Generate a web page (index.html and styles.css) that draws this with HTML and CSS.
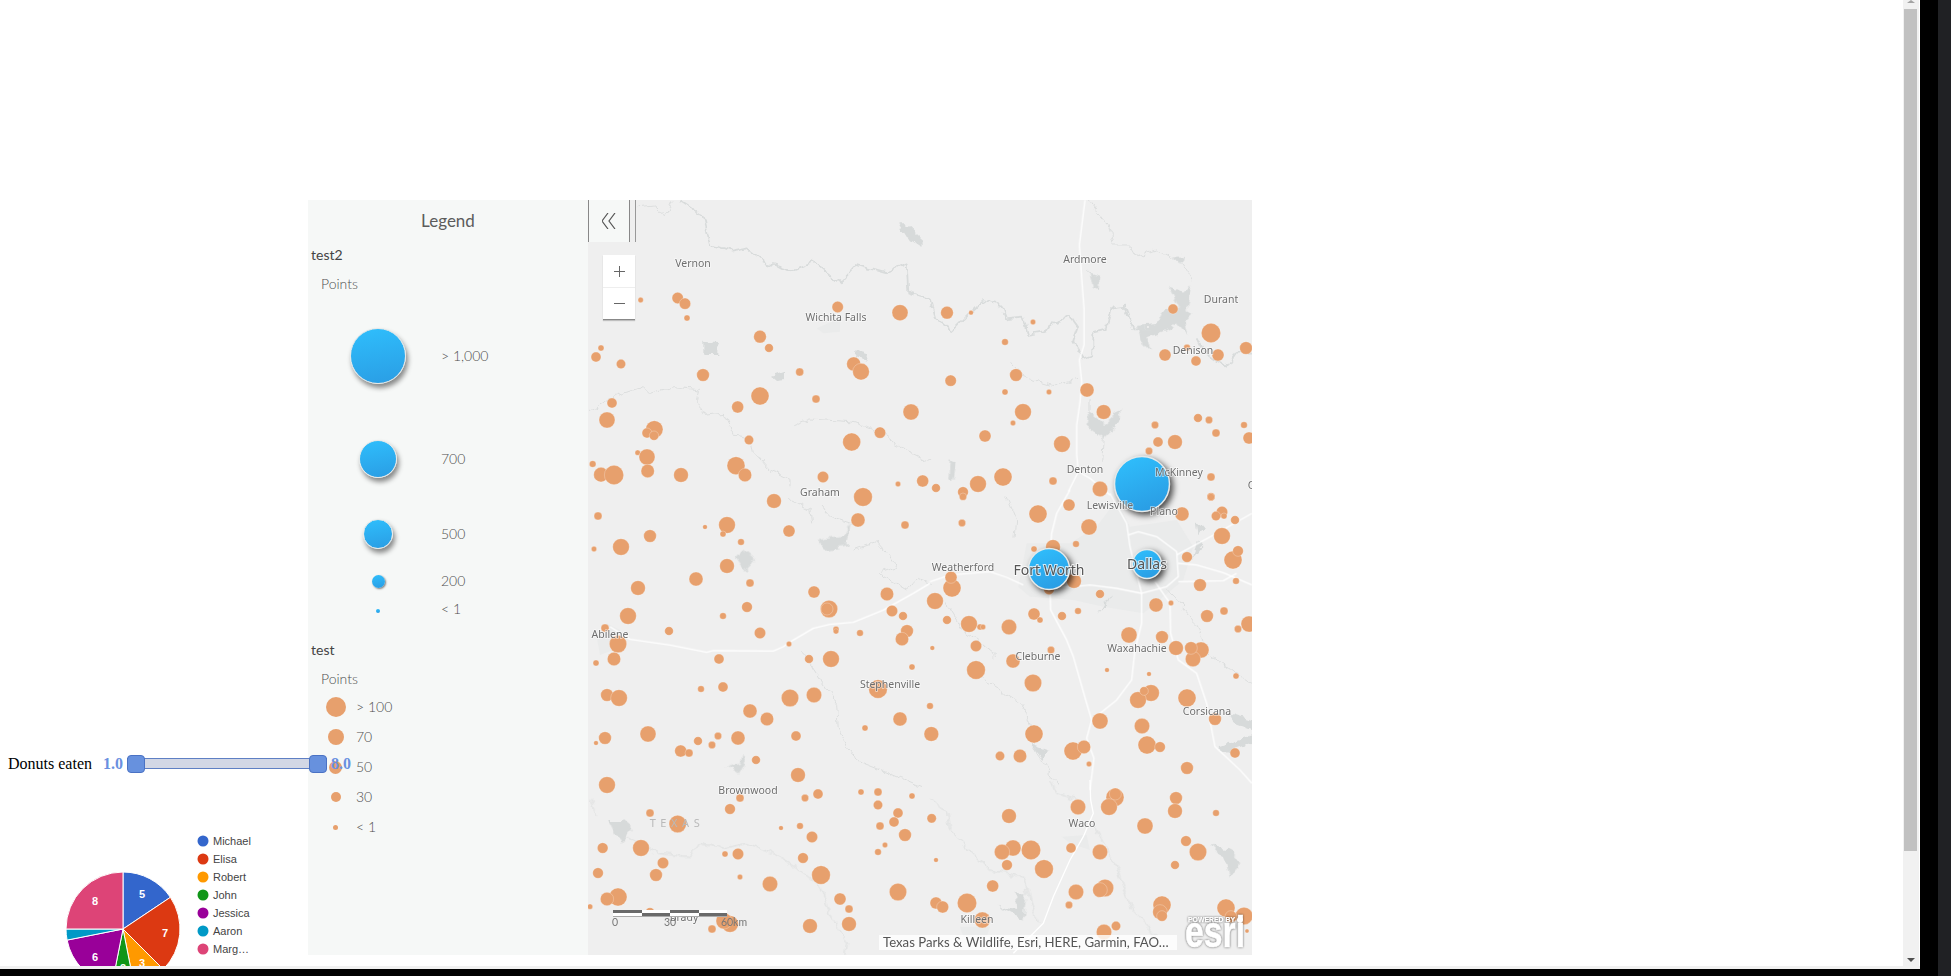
FILE: index.html
```html
<!DOCTYPE html>
<html lang="en">
<head>
    <meta charset="UTF-8">
    <meta name="viewport" content="width=device-width, initial-scale=1.0">
    <title>Document</title>
    <link rel="stylesheet" href="styles.css">
</head>
<body>
<div class="window">
    <div class="window-main">
        <div class="viewport">
            <div class="side">
                <div class="slider-row">
                    <span class="slider-label">Donuts eaten</span>
                    <span class="slider-value">1.0</span>
                    <div class="slider-track">
                        <span class="slider-handle handle-min"></span>
                        <span class="slider-handle handle-max"></span>
                    </div>
                    <span class="slider-value value-max">8.0</span>
                </div>
                <svg class="pie" viewBox="0 830 300 136" width="300" height="136">
                    <g stroke="#fff" stroke-width="1">
                        <path fill="#3366cc" d="M123 929V872A57 57 0 0 1 170.4 897.3Z"/>
                        <path fill="#dc3912" d="M123 929L170.4 897.3A57 57 0 0 1 163.3 969.3Z"/>
                        <path fill="#ff9900" d="M123 929L163.3 969.3A57 57 0 0 1 134.1 984.9Z"/>
                        <path fill="#109618" d="M123 929L134.1 984.9A57 57 0 0 1 111.9 984.9Z"/>
                        <path fill="#990099" d="M123 929L111.9 984.9A57 57 0 0 1 67.1 940.1Z"/>
                        <path fill="#0099c6" d="M123 929L67.1 940.1A57 57 0 0 1 66 929Z"/>
                        <path fill="#dd4477" d="M123 929H66A57 57 0 0 1 123 872Z"/>
                    </g>
                    <g class="pie-values">
                        <text x="142" y="898">5</text>
                        <text x="165" y="937">7</text>
                        <text x="142" y="967">3</text>
                        <text x="123" y="972">2</text>
                        <text x="95" y="961">6</text>
                        <text x="95" y="905">8</text>
                    </g>
                    <circle cx="203" cy="841" r="5.5" fill="#3366cc"/>
                    <circle cx="203" cy="859" r="5.5" fill="#dc3912"/>
                    <circle cx="203" cy="877" r="5.5" fill="#ff9900"/>
                    <circle cx="203" cy="895" r="5.5" fill="#109618"/>
                    <circle cx="203" cy="913" r="5.5" fill="#990099"/>
                    <circle cx="203" cy="931" r="5.5" fill="#0099c6"/>
                    <circle cx="203" cy="949" r="5.5" fill="#dd4477"/>
                    <g class="pie-names">
                        <text x="213" y="845">Michael</text>
                        <text x="213" y="863">Elisa</text>
                        <text x="213" y="881">Robert</text>
                        <text x="213" y="899">John</text>
                        <text x="213" y="917">Jessica</text>
                        <text x="213" y="935">Aaron</text>
                        <text x="213" y="953">Marg…</text>
                    </g>
                </svg>
            </div>

            <div class="widget">
                <div class="legend">
                    <div class="legend-title">Legend</div>
                    <div class="layer-name">test2</div>
                    <div class="layer-sub">Points</div>
                    <div class="rows-blue">
                        <div class="row"><span class="sym"><i class="blue blue-xl"></i></span><span class="row-text">&gt; 1,000</span></div>
                        <div class="row"><span class="sym"><i class="blue blue-l"></i></span><span class="row-text">700</span></div>
                        <div class="row"><span class="sym"><i class="blue blue-m"></i></span><span class="row-text">500</span></div>
                        <div class="row"><span class="sym"><i class="blue blue-s"></i></span><span class="row-text">200</span></div>
                        <div class="row row-tiny"><span class="sym"><i class="blue blue-xs"></i></span><span class="row-text">&lt; 1</span></div>
                    </div>
                    <div class="layer-name layer-next">test</div>
                    <div class="layer-sub">Points</div>
                    <div class="rows-orange">
                        <div class="row"><span class="sym"><i class="dot dot-xl"></i></span><span class="row-text">&gt; 100</span></div>
                        <div class="row"><span class="sym"><i class="dot dot-l"></i></span><span class="row-text">70</span></div>
                        <div class="row"><span class="sym"><i class="dot dot-m"></i></span><span class="row-text">50</span></div>
                        <div class="row"><span class="sym"><i class="dot dot-s"></i></span><span class="row-text">30</span></div>
                        <div class="row"><span class="sym"><i class="dot dot-xs"></i></span><span class="row-text">&lt; 1</span></div>
                    </div>
                </div>

                <div class="map">
                    <svg class="map-svg" viewBox="588 200 664 755" width="664" height="755">
                        <defs>
                            <linearGradient id="blueFill" x1="0.2" y1="0" x2="0.6" y2="1">
                                <stop offset="0" stop-color="#2fbefc"/>
                                <stop offset="1" stop-color="#2a9de4"/>
                            </linearGradient>
                            <!-- makes the hand placed lines look like real rivers -->
                            <filter id="wiggle" filterUnits="userSpaceOnUse" x="588" y="200" width="664" height="755">
                                <feTurbulence type="fractalNoise" baseFrequency="0.11" numOctaves="2" seed="4"/>
                                <feDisplacementMap in="SourceGraphic" scale="9" xChannelSelector="R" yChannelSelector="G"/>
                            </filter>
                        </defs>

                        <!-- towns -->
                        <g class="urban">
                            <g transform="translate(930,490) scale(.3333)">
                                <path d="M265 290L290 160L420 160L500 110L560 30L600 110L740 90L790 170L760 270L700 320L640 370L520 350L430 330L300 320Z"/>
                            </g>
                            <g transform="translate(590,490) scale(.3333)">
                                <path d="M20 440L50 400L90 420L70 480L30 495Z"/>
                            </g>
                            <g transform="translate(590,195) scale(.3333)">
                                <path d="M680 400L750 370L750 410L700 415Z"/>
                            </g>
                            <g transform="translate(930,780) scale(.3333)">
                                <path d="M395 170L470 165L480 210L420 190Z"/>
                                <path d="M90 440L180 440L170 470L100 470Z"/>
                            </g>
                        </g>

                        <!-- lakes -->
                        <g class="lakes">
                            <g transform="translate(590,195) scale(.3333)">
                                <path d="M925 85L945 85L995 130L995 155L950 125Z"/>
                                <path d="M340 440L385 445L385 480L340 480Z"/>
                                <path d="M540 545L585 530L585 555L555 558Z"/>
                                <path d="M800 465L835 475L830 500L795 490Z"/>
                            </g>
                            <g transform="translate(930,195) scale(.3333)">
                                <path d="M478 230L510 240L505 285L490 280Z"/>
                                <path d="M715 275L760 290L785 265L770 340L790 350L760 380L770 420L740 385L720 400L650 430L660 470L640 450L625 395L680 390L700 350L750 340Z"/>
                                <path d="M725 185L760 180L750 210Z"/>
                                <path d="M475 650L520 690L575 640L570 680L520 730L470 690Z"/>
                                <path d="M60 790L80 800L70 855L55 850Z"/>
                            </g>
                            <g transform="translate(590,490) scale(.3333)">
                                <path d="M680 150L760 140L785 95L775 165L705 180Z"/>
                                <path d="M435 205L460 180L495 210L465 245L450 225Z"/>
                                <path d="M410 830L450 820L455 790L465 815L445 850Z"/>
                            </g>
                            <g transform="translate(590,780) scale(.3333)">
                                <path d="M55 120L95 120L125 145L95 185L75 160Z"/>
                            </g>
                            <g transform="translate(930,490) scale(.3333)">
                                <path d="M505 375L545 310L530 345Z"/>
                                <path d="M900 670L966 690L966 720L910 700Z"/>
                                <path d="M865 770L966 735L966 760L890 785Z"/>
                                <path d="M800 150L820 170L790 205Z"/>
                                <path d="M800 90L825 120L805 135Z"/>
                                <path d="M300 760L355 780L340 810Z"/>
                            </g>
                            <g transform="translate(930,780) scale(.3333)">
                                <path d="M845 195L900 205L930 245L900 290L885 240Z"/>
                                <path d="M205 380L260 390L255 340L290 340L280 420Z"/>
                            </g>
                        </g>

                        <!-- rivers and county lines -->
                        <g class="rivers">
                            <g transform="translate(590,195) scale(.3333)">
                                <path d="M140 35L190 30L230 65L250 20"/>
                                <path class="river-wide" d="M270 15L340 60L360 150L420 170L470 160L520 200L610 225L670 200L750 265L800 210L890 235L950 205L955 290L1020 310"/>
                                <path d="M0 650L70 605L160 575L180 595L250 575L325 585L320 620L345 660L400 655L430 720L480 730L490 770L540 825L600 850L600 880"/>
                                <path d="M610 692L660 672L780 680L860 705L920 750L1020 800"/>
                            </g>
                            <g transform="translate(930,195) scale(.3333)">
                                <path class="river-wide" d="M0 310L15 370L70 405L160 315L210 330L225 370L280 365L295 420L350 410L370 380L420 365L445 400L430 440L460 490L490 480L490 410L530 400L545 340L585 335L610 400L660 400"/>
                                <path class="river-wide" d="M800 430L820 470L890 515L920 470L966 470"/>
                                <path d="M475 15L540 100L550 150L600 150L620 185L680 165L760 210L790 260"/>
                                <path d="M245 505L280 545L370 572L450 550"/>
                                <path d="M480 610L480 660M520 730L515 800"/>
                            </g>
                            <g transform="translate(590,490) scale(.3333)">
                                <path d="M600 30L660 60L665 100M690 45L720 80L780 100"/>
                                <path d="M790 180L860 155L900 200L920 230L865 250L950 300L980 265L1020 280"/>
                                <path d="M640 490L700 580L740 640L745 720L770 770L800 810L900 850L1000 890"/>
                            </g>
                            <g transform="translate(590,780) scale(.3333)">
                                <path d="M0 60L20 110M100 170L200 220L300 230L330 190L400 205L470 190L540 215L600 250L630 270L690 320L720 400L770 490L765 525"/>
                            </g>
                            <g transform="translate(930,490) scale(.3333)">
                                <path d="M230 20L260 90L255 140"/>
                                <path d="M50 340L100 420L150 460L200 500"/>
                                <path d="M150 560L210 600L270 640L290 670L320 790L390 890"/>
                                <path d="M710 300L800 400L830 490L966 580"/>
                            </g>
                            <g transform="translate(930,780) scale(.3333)">
                                <path d="M365 0L380 40L440 60"/>
                                <path d="M0 55L50 100L60 150L180 270L280 290L320 430"/>
                                <path d="M490 130L560 260L600 380L680 470"/>
                            </g>
                        </g>

                        <!-- highways -->
                        <g class="roads">
                            <g transform="translate(930,195) scale(.3333)">
                                <path d="M465 15L458 70L448 150L455 250L462 340L462 450L448 495L455 560L450 620L440 690L440 780L445 830L415 890"/>
                                <path d="M445 830L480 850L540 900"/>
                            </g>
                            <g transform="translate(590,490) scale(.3333)">
                                <path d="M60 410L120 448L240 465L350 487L370 482L550 483L580 470L610 450L670 415L720 403L790 397L880 360L970 310L1020 280"/>
                            </g>
                            <g transform="translate(930,490) scale(.3333)">
                                <path d="M420 0L380 70L365 130L362 170"/>
                                <path d="M540 10L590 100L600 170L635 310"/>
                                <path d="M595 135L625 125L680 140L740 185L745 260L710 290L635 310L560 295L480 285L430 290L360 290"/>
                                <path d="M0 275L60 255L180 245L230 262L280 285"/>
                                <path d="M360 290L362 360L410 450L430 500L470 640L485 690L470 745L492 805L480 900"/>
                                <path d="M635 310L635 400L615 480L605 570L560 630L510 670"/>
                                <path d="M675 275L720 340L722 430L745 510L800 550L830 640L855 770L930 840L966 880"/>
                                <path d="M740 195L860 130L966 70"/>
                                <path d="M745 220L800 225L880 248L966 285"/>
                                <path d="M745 275L880 272L920 250"/>
                            </g>
                            <g transform="translate(930,780) scale(.3333)">
                                <path d="M480 0L482 60L490 100L460 170L420 240L370 350L340 430L250 520"/>
                            </g>
                        </g>

                        <g id="points" class="points"></g>

                        <circle class="cluster" cx="1142" cy="484" r="27.5"/>
                        <circle class="cluster" cx="1049" cy="569" r="20.5"/>
                        <circle class="cluster" cx="1147" cy="564" r="14.5"/>

                        <g class="labels">
                            <text x="693" y="263">Vernon</text>
                            <text x="836" y="317">Wichita Falls</text>
                            <text x="820" y="492">Graham</text>
                            <text x="1085" y="259">Ardmore</text>
                            <text x="1221" y="299">Durant</text>
                            <text x="1193" y="350">Denison</text>
                            <text x="1085" y="469">Denton</text>
                            <text x="1179" y="472">McKinney</text>
                            <text x="1251" y="485">C</text>
                            <text x="1110" y="505">Lewisville</text>
                            <text x="1164" y="511">Plano</text>
                            <text x="963" y="567">Weatherford</text>
                            <text x="1038" y="656">Cleburne</text>
                            <text x="1137" y="648">Waxahachie</text>
                            <text x="1207" y="711">Corsicana</text>
                            <text x="610" y="634">Abilene</text>
                            <text x="890" y="684">Stephenville</text>
                            <text x="748" y="790">Brownwood</text>
                            <text x="1082" y="823">Waco</text>
                            <text x="977" y="919">Killeen</text>
                            <text x="684" y="917">Brady</text>
                            <text class="label-big" x="1049" y="569">Fort Worth</text>
                            <text class="label-big" x="1147" y="563">Dallas</text>
                            <text class="label-state" x="677" y="822">TEXAS</text>
                        </g>

                        <!-- scale bar -->
                        <g class="scale-bar">
                            <rect x="613" y="910" width="29" height="3" fill="#6a6a6a"/>
                            <rect x="642" y="910" width="28" height="3" fill="#fff"/>
                            <rect x="670" y="910" width="29" height="3" fill="#6a6a6a"/>
                            <rect x="699" y="910" width="28" height="3" fill="#fff"/>
                            <rect x="613" y="913" width="29" height="3" fill="#fff"/>
                            <rect x="642" y="913" width="28" height="3" fill="#6a6a6a"/>
                            <rect x="670" y="913" width="29" height="3" fill="#fff"/>
                            <rect x="699" y="913" width="28" height="3" fill="#6a6a6a"/>
                            <rect x="613" y="916" width="114" height="1" fill="#aaa"/>
                            <text x="615" y="926">0</text>
                            <text x="670" y="926">30</text>
                            <text x="734" y="926">60km</text>
                        </g>

                        <!-- powered by logo -->
                        <g class="esri">
                            <text class="esri-small" x="1188" y="922" textLength="47" lengthAdjust="spacingAndGlyphs">POWERED BY</text>
                            <circle cx="1240" cy="920" r="3" fill="#fff"/>
                            <text class="esri-big" x="1185" y="947" textLength="60" lengthAdjust="spacingAndGlyphs">esri</text>
                        </g>
                    </svg>

                    <div class="collapse">
                        <svg width="14" height="16" viewBox="0 0 14 16">
                            <path d="M6 0L0 8L6 16M13 0L7 8L13 16" fill="none" stroke="#555" stroke-width="1.2"/>
                        </svg>
                    </div>
                    <div class="collapse-edge"></div>

                    <div class="zoom">
                        <div class="zoom-btn">
                            <svg width="11" height="11" viewBox="0 0 11 11"><path d="M5.5 0V11M0 5.5H11" stroke="#666" stroke-width="1"/></svg>
                        </div>
                        <div class="zoom-btn">
                            <svg width="11" height="11" viewBox="0 0 11 11"><path d="M0 5.5H11" stroke="#666" stroke-width="1"/></svg>
                        </div>
                    </div>

                    <div class="attribution">Texas Parks &amp; Wildlife, Esri, HERE, Garmin, FAO…</div>
                </div>
            </div>
        </div>

        <div class="scrollbar">
            <span class="arrow-up"></span>
            <span class="thumb"></span>
            <span class="arrow-down"></span>
        </div>
    </div>
    <div class="scroll-bottom"></div>
</div>
<div class="strip"></div>

<script src="map.js"></script>
</body>
</html>
```

FILE: styles.css
```css
* {
    box-sizing: border-box;
}

html, body {
    margin: 0;
    height: 100%;
    overflow: hidden;
    background: #000;
}

body {
    display: flex;
    justify-content: space-between;
}

.window {
    width: 1920px;
    height: 969px;
}

.window-main {
    display: flex;
    height: 966px;
}

.viewport {
    width: 1903px;
    height: 966px;
    display: flex;
    background: #fff;
    overflow: hidden;
}

.scroll-bottom {
    height: 3px;
    background: #f1f1f1;
}

.strip {
    width: 13px;
    height: 976px;
    background: #202124;
}

.scrollbar {
    width: 17px;
    height: 966px;
    display: flex;
    flex-direction: column;
    align-items: center;
    padding-right: 1px;
    background: #f1f1f1;
    border-right: 1px solid #fff;
}

.arrow-up {
    border-left: 4px solid transparent;
    border-right: 4px solid transparent;
    border-bottom: 3px solid #a3a3a3;
}

.thumb {
    width: 13px;
    height: 842px;
    margin-top: 6px;
    background: #c1c1c1;
}

.arrow-down {
    margin-top: 107px;
    border-left: 4px solid transparent;
    border-right: 4px solid transparent;
    border-top: 4px solid #505050;
}

/* left column */

.side {
    position: relative;
    z-index: 2;
    width: 308px;
    flex-shrink: 0;
    padding-top: 754px;
}

.slider-row {
    display: flex;
    align-items: center;
    width: 360px;
    height: 18px;
    font-family: "Liberation Serif", serif;
    font-size: 16px;
}

.slider-label {
    width: 84px;
    margin-left: 8px;
    margin-right: 11px;
    padding-top: 2px;
    flex-shrink: 0;
}

.slider-value {
    width: 20px;
    padding-top: 2px;
    color: #6a90e0;
    font-weight: bold;
    flex-shrink: 0;
}

.value-max {
    margin-left: 4px;
}

.slider-track {
    position: relative;
    width: 200px;
    height: 11px;
    margin-left: 4px;
    flex-shrink: 0;
    background: #d2d7e5;
    border: 1px solid #5e7fc4;
}

.slider-handle {
    position: absolute;
    top: -4px;
    width: 18px;
    height: 18px;
    background: #6791de;
    border: 1px solid #4a72c4;
    border-radius: 4px;
}

.handle-min {
    left: -1px;
}

.handle-max {
    right: -1px;
}

.pie {
    display: block;
    margin-top: 58px;
}

.pie-values text {
    fill: #fff;
    font-family: "Liberation Sans", sans-serif;
    font-size: 11px;
    font-weight: bold;
    text-anchor: middle;
}

.pie-names text {
    fill: #444;
    font-family: "Liberation Sans", sans-serif;
    font-size: 11px;
}

/* map widget */

.widget {
    display: flex;
    width: 944px;
    height: 755px;
    margin-top: 200px;
    flex-shrink: 0;
}

.legend {
    width: 280px;
    flex-shrink: 0;
    background: #f6f8f7;
    color: #4f4f4f;
    font-family: Lato, sans-serif;
    font-weight: 300;
    font-size: 14px;
}

.legend-title {
    height: 42px;
    line-height: 42px;
    text-align: center;
    font-size: 17px;
    font-weight: 400;
    color: #5c5c5c;
}

.layer-name {
    height: 16px;
    line-height: 16px;
    margin-top: 5px;
    padding-left: 3px;
    color: #444;
    font-weight: 400;
    font-size: 14px;
}

.layer-next {
    margin-top: 26px;
}

.layer-sub {
    height: 16px;
    line-height: 16px;
    margin-top: 13px;
    padding-left: 13px;
}

.rows-blue {
    display: grid;
    grid-template-rows: 112px 94px 56px 38px 16px;
    margin-top: 8px;
}

.rows-blue .row {
    display: grid;
    grid-template-columns: 126px auto;
    align-items: center;
    padding-left: 7px;
}

.rows-blue .row-text {
    padding-bottom: 2px;
}

.rows-blue .row-tiny {
    align-items: start;
}

.row-tiny .sym {
    padding-top: 9px;
}

.sym {
    display: flex;
    justify-content: center;
}

.blue {
    display: block;
    border-radius: 50%;
    background: linear-gradient(170deg, #2fbefc, #2a9de4);
    border: 1.5px solid #e4e8e8;
    box-shadow: 2px 4px 5px rgba(0, 0, 0, .45);
}

.blue-xl {
    width: 56px;
    height: 56px;
}

.blue-l {
    width: 38px;
    height: 38px;
}

.blue-m {
    width: 30px;
    height: 30px;
}

.blue-s {
    width: 13px;
    height: 13px;
    border: 0;
    box-shadow: 1px 1px 2px rgba(0, 0, 0, .5);
}

.blue-xs {
    width: 4px;
    height: 4px;
    border: 0;
    box-shadow: none;
}

.rows-orange {
    margin-top: 5px;
}

.rows-orange .row {
    display: grid;
    grid-template-columns: 41px auto;
    align-items: center;
    height: 30px;
    padding-left: 7px;
}

.rows-orange .row-text {
    padding-bottom: 1px;
}

.dot {
    display: block;
    border-radius: 50%;
    background: #e7a06d;
}

.dot-xl {
    width: 20px;
    height: 20px;
}

.dot-l {
    width: 16px;
    height: 16px;
}

.dot-m {
    width: 13px;
    height: 13px;
}

.dot-s {
    width: 10px;
    height: 10px;
}

.dot-xs {
    width: 5px;
    height: 5px;
}

.map {
    position: relative;
    width: 664px;
    height: 755px;
    overflow: hidden;
    background: #efefef;
}

.map-svg {
    display: block;
}

.map-svg path {
    vector-effect: non-scaling-stroke;
}

.urban path {
    fill: #eaebeb;
}

.lakes {
    filter: url(#wiggle);
}

.lakes path {
    fill: #d7dada;
}

.rivers {
    filter: url(#wiggle);
}

.rivers path {
    fill: none;
    stroke: #dcdede;
    stroke-width: 1;
    stroke-linejoin: round;
}

.rivers .river-wide {
    stroke: #d8dbdb;
    stroke-width: 1.8;
}

.roads path {
    fill: none;
    stroke: #fff;
    stroke-width: 1.3;
    stroke-linejoin: round;
}

.points circle {
    fill: #e7a06d;
    stroke: rgba(255, 255, 255, .25);
    stroke-width: 1;
}

.cluster {
    fill: url(#blueFill);
    stroke: #e4e8e8;
    stroke-width: 1.5;
    filter: drop-shadow(3px 3px 3px rgba(0, 0, 0, .7));
}

.labels text {
    fill: #6e6e6e;
    font-family: "Noto Sans", sans-serif;
    font-size: 10.5px;
    text-anchor: middle;
    dominant-baseline: central;
    paint-order: stroke;
    stroke: rgba(255, 255, 255, .6);
    stroke-width: 1.5px;
}

.labels .label-big {
    fill: #555;
    font-size: 14px;
    stroke: rgba(255, 255, 255, .75);
    stroke-width: 2px;
}

.labels .label-state {
    fill: #b9b9b9;
    stroke: none;
    font-size: 11px;
    letter-spacing: 4.6px;
}

.scale-bar text {
    fill: #777;
    font-family: Lato, sans-serif;
    font-size: 10.5px;
    text-anchor: middle;
}

.esri-small {
    fill: #fff;
    stroke: #fff;
    stroke-width: .25px;
    font-family: "Liberation Sans", sans-serif;
    font-size: 8px;
    font-weight: bold;
}

.esri-big {
    fill: #fff;
    stroke: #fff;
    stroke-width: .6px;
    font-family: "Liberation Sans", sans-serif;
    font-size: 44px;
    font-weight: bold;
}

.esri {
    filter: drop-shadow(0 0 1px rgba(0, 0, 0, .6));
}

.collapse {
    position: absolute;
    top: 0;
    left: 0;
    width: 42px;
    height: 42px;
    display: flex;
    align-items: center;
    justify-content: center;
    background: #f6f8f7;
    border-left: 1px solid #888;
    border-right: 1px solid #888;
}

.collapse-edge {
    position: absolute;
    top: 0;
    left: 47px;
    width: 1px;
    height: 42px;
    background: #999;
}

.zoom {
    position: absolute;
    top: 55px;
    left: 15px;
    width: 32px;
    background: #fff;
    border-bottom: 1px solid #888;
    box-shadow: 0 1px 1px rgba(0, 0, 0, .2);
}

.zoom-btn {
    height: 32px;
    display: flex;
    align-items: center;
    justify-content: center;
}

.zoom-btn + .zoom-btn {
    border-top: 1px solid #eee;
}

.attribution {
    position: absolute;
    left: 291px;
    top: 735px;
    width: 298px;
    height: 15px;
    padding-left: 4px;
    line-height: 15px;
    white-space: nowrap;
    background: rgba(255, 255, 255, .8);
    color: #555;
    font-family: Lato, sans-serif;
    font-size: 13.2px;
}
```

FILE: map.js
```js
// points of the "test" layer, [x, y, r*3] relative to the corner of each block
const blocks = [
    { x: 590, y: 195, pts: [
        [152,315,8],[263,309,17],[285,326,17],[291,369,9],[33,459,9],[18,486,15],[93,507,14],[339,540,19],
        [510,425,19],[537,459,13],[629,531,12],[743,336,17],[930,353,24],[791,507,21],[813,530,25],[66,624,15],
        [51,675,24],[193,703,26],[171,714,15],[192,722,14],[143,773,8],[171,786,24],[173,828,20],[8,807,10],
        [33,839,22],[72,840,29],[273,840,22],[438,812,27],[465,840,20],[443,636,18],[510,603,27],[678,612,12],
        [477,735,14],[785,741,27],[870,713,17],[963,651,24],[699,846,17],[998,858,18],[924,867,8]
    ]},
    { x: 930, y: 195, pts: [
        [51,353,19],[123,353,7],[309,381,8],[225,441,10],[62,557,17],[258,540,19],[225,591,9],[357,591,8],
        [471,585,21],[521,651,22],[279,651,25],[249,684,8],[165,723,18],[396,747,25],[219,846,27],[144,867,25],
        [99,891,16],[18,879,13],[369,858,12],[510,882,23],[729,342,15],[843,414,29],[771,458,10],[705,480,18],
        [798,498,15],[864,480,18],[948,459,19],[675,690,11],[804,669,13],[837,675,11],[858,714,12],[942,690,10],
        [957,729,18],[684,741,15],[735,741,22],[657,768,11],[843,846,12],[843,905,12]
    ]},
    { x: 590, y: 490, pts: [
        [24,78,12],[12,177,8],[93,171,25],[180,138,19],[345,111,7],[411,105,25],[399,132,9],[453,156,10],
        [552,33,22],[597,123,18],[819,21,28],[804,90,21],[945,105,12],[411,228,22],[480,279,12],[318,267,21],
        [144,294,22],[114,378,25],[471,351,16],[399,378,10],[672,306,18],[717,357,26],[711,357,18],[891,312,20],
        [906,363,17],[939,378,13],[951,423,19],[936,447,20],[237,423,13],[510,429,17],[738,418,9],[738,424,8],
        [810,429,10],[597,462,8],[45,414,12],[84,462,26],[72,507,20],[18,519,9],[387,507,15],[657,507,13],
        [723,507,25],[966,531,9],[51,615,19],[87,624,25],[333,597,10],[399,591,15],[600,624,26],[672,615,23],
        [864,597,28],[480,663,21],[531,687,20],[930,687,21],[825,714,9],[45,744,19],[18,759,7],[174,732,24],
        [324,753,13],[384,738,11],[366,765,11],[272,783,18],[297,789,12],[444,744,21],[618,738,15],[498,810,13],
        [624,855,22],[51,885,25]
    ]},
    { x: 930, y: 490, pts: [
        [99,20,11],[324,72,27],[417,45,18],[96,99,11],[477,111,24],[756,72,21],[843,21,11],[876,66,17],
        [858,78,14],[882,78,9],[915,90,13],[876,138,25],[438,162,10],[369,171,22],[312,177,9],[909,210,27],
        [924,183,16],[771,201,16],[66,294,27],[63,262,18],[15,333,25],[432,273,22],[357,298,16],[810,285,19],
        [918,273,10],[510,312,13],[723,339,8],[678,345,21],[312,372,18],[330,390,9],[396,378,13],[444,363,10],
        [882,363,12],[831,378,19],[51,390,13],[117,402,25],[150,411,9],[159,411,8],[237,411,23],[7,474,7],
        [138,468,17],[957,402,24],[924,417,11],[597,435,24],[696,441,19],[738,474,22],[813,480,24],[789,507,23],
        [783,474,19],[363,480,11],[249,513,21],[138,540,28],[531,540,7],[657,552,7],[918,558,9],[309,579,26],
        [663,609,25],[624,630,25],[642,603,13],[771,624,27],[0,648,10],[510,693,24],[855,687,19],[636,708,23],
        [312,732,27],[4,732,22],[651,765,27],[690,771,16],[915,789,15],[429,783,27],[462,771,20],[210,798,14],
        [270,798,20],[477,822,8],[771,834,19]
    ]},
    { x: 590, y: 780, pts: [
        [450,54,12],[420,87,16],[180,99,12],[263,132,26],[645,54,11],[684,42,15],[813,36,9],[864,36,12],
        [966,48,9],[864,75,14],[924,99,15],[912,126,15],[573,144,7],[630,138,10],[666,171,17],[870,138,12],
        [945,165,19],[885,195,8],[864,216,10],[38,204,16],[153,204,25],[405,222,9],[444,222,17],[219,249,17],
        [639,234,16],[24,279,16],[198,285,19],[693,285,28],[450,291,8],[540,312,23],[750,357,18],[777,387,12],
        [84,351,27],[51,357,20],[0,380,8],[924,336,26],[180,397,14],[660,438,22],[777,432,22],[366,447,12],
        [420,432,25],[402,423,24]
    ]},
    { x: 930, y: 780, pts: [
        [444,81,23],[555,52,27],[556,42,18],[537,81,25],[738,54,19],[735,93,22],[858,99,10],[237,108,22],
        [645,138,24],[5,115,14],[768,183,16],[804,216,26],[423,204,15],[510,216,23],[249,204,24],[216,216,23],
        [303,210,29],[231,255,16],[342,267,28],[735,255,13],[18,240,7],[188,318,18],[438,336,23],[525,324,26],
        [510,330,22],[417,375,11],[18,369,18],[38,381,18],[111,369,29],[157,420,24],[696,375,27],[690,396,22],
        [696,408,16],[888,384,27],[942,408,26],[903,410,18],[558,438,14],[522,456,23],[951,453,6]
    ]}
];

const layer = document.querySelector('#points');

blocks.forEach((block) => {
    block.pts.forEach((p) => {
        const dot = document.createElementNS('http://www.w3.org/2000/svg', 'circle');
        dot.setAttribute('cx', block.x + p[0] / 3);
        dot.setAttribute('cy', block.y + p[1] / 3);
        dot.setAttribute('r', p[2] / 3);
        layer.appendChild(dot);
    });
});
```
